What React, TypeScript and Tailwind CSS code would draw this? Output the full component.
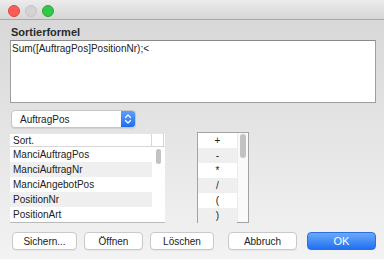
import React from "react";

const fields = ["ManciAuftragPos", "ManciAuftragNr", "ManciAngebotPos", "PositionNr", "PositionArt"];
const ops = ["+", "-", "*", "/", "(", ")"];

function Btn({ label, width, primary }: { label: string; width: string; primary?: boolean }) {
  if (primary) {
    return (
      <div
        className={`${width} h-[18px] rounded-[4px] border border-[#2d6fe0] bg-gradient-to-b from-[#6aa9fa] to-[#1f6ff0] text-white text-[11px] flex items-center justify-center`}
      >
        {label}
      </div>
    );
  }
  return (
    <div
      className={`${width} h-[18px] rounded-[4px] border border-[#c9c9c9] bg-white text-[#222] text-[10px] flex items-center justify-center shadow-[0_1px_0_rgba(0,0,0,0.05)]`}
    >
      {label}
    </div>
  );
}

export default function App() {
  return (
    <div className="w-[390px] h-[265px] bg-white font-['Liberation_Sans',Arial,sans-serif] text-[#222]">
      <div className="w-[384px] h-[259px] flex flex-col overflow-hidden">
        {/* title bar */}
        <div className="h-[20px] shrink-0 bg-gradient-to-b from-[#ececec] to-[#d6d6d6] border-b border-[#a9a9a9] flex items-center gap-[5px] pl-[8px] pt-[2px]">
          <span className="w-[12px] h-[12px] rounded-full bg-[#fc5d57] border border-[#e0443e]" />
          <span className="w-[12px] h-[12px] rounded-full bg-[#d3d3d3] border border-[#c4c4c4]" />
          <span className="w-[12px] h-[12px] rounded-full bg-[#33c748] border border-[#27aa35]" />
        </div>

        {/* body */}
        <div className="flex-1 bg-gradient-to-b from-[#d8d8d8] to-[#f3f3f3] px-[10px] flex flex-col">
          <div className="mt-[5px] h-[14px] pl-[1px] text-[11px] font-bold leading-[14px] text-[#2a2a2a]">Sortierformel</div>

          <div className="mt-[1px] w-[366px] h-[63px] bg-white border border-[#9e9e9e] border-t-[#8a8a8a] px-[1px] pt-[2px] text-[10px] leading-[12px]">
            Sum([AuftragPos]PositionNr);&lt;
          </div>

          <div className="mt-[7px] ml-[1px] w-[125px] h-[18px] flex rounded-[4px] bg-white border border-[#c6c6c6] shadow-[0_1px_1px_rgba(0,0,0,0.08)] overflow-hidden">
            <div className="flex-1 pl-[8px] text-[10px] flex items-center">AuftragPos</div>
            <div className="w-[14px] bg-gradient-to-b from-[#5d9ef9] to-[#1b6ef0] flex items-center justify-center">
              <svg width="8" height="12" viewBox="0 0 8 12" fill="none" stroke="white" strokeWidth="1.2" strokeLinecap="round" strokeLinejoin="round">
                <path d="M1.5 4.5 L4 2 L6.5 4.5" />
                <path d="M1.5 7.5 L4 10 L6.5 7.5" />
              </svg>
            </div>
          </div>

          <div className="mt-[4px] flex items-start">
            {/* left list */}
            <div className="mt-[2px] w-[155px] h-[89px] bg-white border-b border-[#b9b9b9] flex flex-col text-[10px]">
              <div className="h-[13px] flex border-b border-[#d6d6d6]">
                <div className="w-[142px] pl-[3px] leading-[13px] border-r border-[#d6d6d6]">Sort.</div>
                <div className="w-[12px] border-r border-[#d6d6d6]" />
              </div>
              <div className="flex flex-1">
                <div className="w-[142px] flex flex-col">
                  {fields.map((f, i) => (
                    <div key={f} className={`h-[15px] pl-[3px] leading-[15px] ${i % 2 === 1 ? "bg-[#efefef]" : "bg-white"}`}>
                      {f}
                    </div>
                  ))}
                </div>
                <div className="w-[13px] flex justify-center pt-[2px]">
                  <div className="w-[5px] h-[15px] rounded-full bg-[#c2c2c2]" />
                </div>
              </div>
            </div>

            {/* right list */}
            <div className="ml-[32px] w-[52px] h-[91px] border border-[#a3a3a3] bg-white flex text-[10px]">
              <div className="w-[39px] flex flex-col">
                {ops.map((o, i) => (
                  <div key={i} className={`h-[15px] leading-[15px] text-center ${i % 2 === 1 ? "bg-[#efefef]" : "bg-white"}`}>
                    {o}
                  </div>
                ))}
              </div>
              <div className="flex-1 bg-[#fafafa] border-l border-[#ececec] flex justify-center pt-[1px]">
                <div className="w-[6px] h-[24px] rounded-full bg-[#c2c2c2]" />
              </div>
            </div>
          </div>

          {/* buttons */}
          <div className="mt-[9px] flex items-center">
            <div className="ml-[2px]">
              <Btn label="Sichern..." width="w-[65px]" />
            </div>
            <div className="ml-[7px]">
              <Btn label="Öffnen" width="w-[59px]" />
            </div>
            <div className="ml-[7px]">
              <Btn label="Löschen" width="w-[64px]" />
            </div>
            <div className="ml-[14px]">
              <Btn label="Abbruch" width="w-[69px]" />
            </div>
            <div className="ml-[10px]">
              <Btn label="OK" width="w-[69px]" primary />
            </div>
          </div>
        </div>
      </div>
    </div>
  );
}
